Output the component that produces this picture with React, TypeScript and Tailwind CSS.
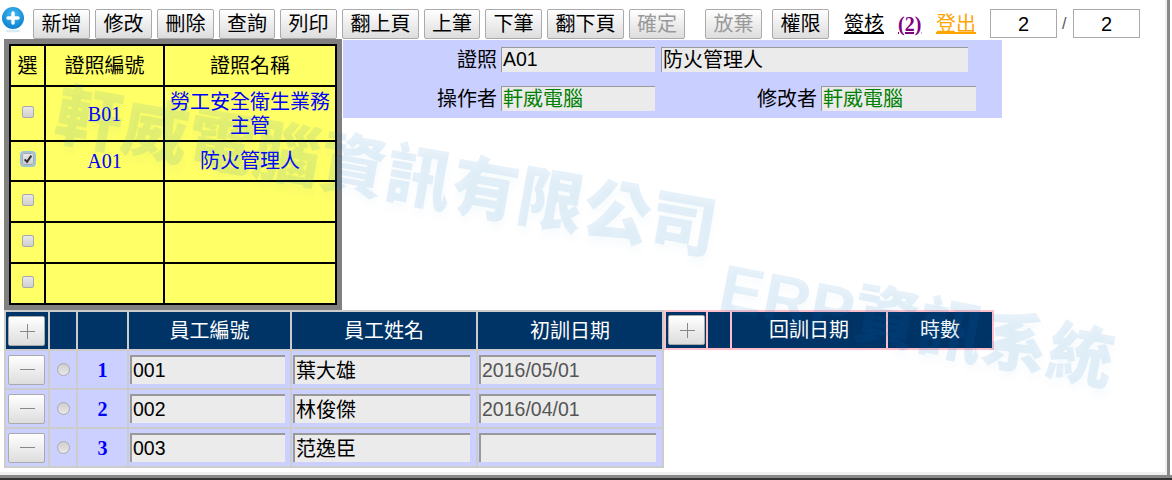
const font = "font-['Liberation_Sans','Noto_Sans_CJK_TC',sans-serif]";

function Btn({ label, disabled, w }: { label: string; disabled?: boolean; w: string }) {
  return (
    <button
      className={`${w} h-[30px] rounded-[2px] border border-[#aaaaaa] bg-gradient-to-b from-white to-[#dddddd] text-[20px] leading-none ${disabled ? 'text-[#999999]' : 'text-black'}`}
    >
      {label}
    </button>
  );
}

function Check({ checked }: { checked?: boolean }) {
  return (
    <span
      className={`mb-[4px] flex h-[12px] w-[12px] items-center justify-center rounded-[2px] border border-[#aaaaaa] bg-gradient-to-b from-[#e8e8e8] to-[#cfcfcf] ${checked ? 'outline-2 outline-[#9cc4dc]' : ''}`}
    >
      {checked && (
        <svg viewBox="0 0 12 12" className="h-[10px] w-[10px]">
          <path d="M2 6.5 L4.8 9.5 L10 2" fill="none" stroke="#333333" strokeWidth="2.4" />
        </svg>
      )}
    </span>
  );
}

function YCell({ children, className = '' }: { children?: React.ReactNode; className?: string }) {
  return (
    <div className={`flex items-center justify-center bg-[#ffff66] text-center text-[20px] leading-[24px] ${className}`}>
      {children}
    </div>
  );
}

function Field({ value, w, color = 'text-black', latin }: { value: string; w: string; color?: string; latin?: boolean }) {
  return (
    <div className={`${w} flex h-[25px] items-center border-t border-l border-[#999999] bg-[#ebebeb] pl-[1px] leading-none ${latin ? 'text-[19.5px]' : 'text-[20px]'} ${color}`}>
      {value}
    </div>
  );
}

function Cell({ value, w, gray, latin }: { value?: string; w: string; gray?: boolean; latin?: boolean }) {
  return (
    <div className="flex items-center bg-[#ccd0ff] pl-[1px]">
      <div className={`${w} flex h-[29px] items-center border-t-2 border-l-2 border-[#999999] bg-[#ebebeb] pl-[1px] leading-none ${latin ? 'text-[19.5px]' : 'text-[20px]'} ${gray ? 'text-[#555555]' : 'text-black'}`}>
        {value}
      </div>
    </div>
  );
}

function SmallBtn({ sign }: { sign: string }) {
  return (
    <button className="flex h-[30px] w-[37px] items-center justify-center rounded-[2px] border border-[#aaaaaa] bg-gradient-to-b from-white to-[#dddddd]">
      <svg viewBox="0 0 35 28" className="h-[28px] w-[35px]">
        <path d={sign === '+' ? 'M18.5 7V22M11 14.5H26' : 'M11 13.5H26'} stroke="#888888" strokeWidth="1" fill="none" />
      </svg>
    </button>
  );
}

const rows = [
  ['1', '001', '葉大雄', '2016/05/01'],
  ['2', '002', '林俊傑', '2016/04/01'],
  ['3', '003', '范逸臣', ''],
];

const mark =
  "pointer-events-none absolute origin-top-left leading-none font-black whitespace-nowrap text-[#0a78c8]/10 [text-shadow:2px_7px_7px_rgba(10,120,200,0.03)]";

export default function App() {
  return (
    <div className={`${font} relative h-[480px] w-[1172px] overflow-hidden bg-white text-black`}>
      <div className="flex h-[39px] items-start pt-[9px]">
        <svg viewBox="0 0 24 26" className="mt-[-2px] ml-[1px] h-[26px] w-[24px]">
          <defs>
            <radialGradient id="b" cx="50%" cy="35%" r="65%">
              <stop offset="0%" stopColor="#45bdf2" />
              <stop offset="100%" stopColor="#0a7fd0" />
            </radialGradient>
          </defs>
          <circle cx="12" cy="11" r="11" fill="url(#b)" />
          <ellipse cx="12" cy="24" rx="8" ry="1.5" fill="#d8ecf8" />
          <path d="M12 6V16M7 11H17" stroke="#ffffff" strokeWidth="3.4" strokeLinecap="round" />
        </svg>
        <div className="ml-[8px] flex gap-[5px]">
          <Btn label="新增" w="w-[57px]" />
          <Btn label="修改" w="w-[57px]" />
          <Btn label="刪除" w="w-[57px]" />
          <Btn label="查詢" w="w-[56px]" />
          <Btn label="列印" w="w-[57px]" />
          <Btn label="翻上頁" w="w-[77px]" />
          <Btn label="上筆" w="w-[56px]" />
          <Btn label="下筆" w="w-[57px]" />
          <Btn label="翻下頁" w="w-[77px]" />
          <Btn label="確定" w="w-[56px]" disabled />
        </div>
        <div className="ml-[20px]"><Btn label="放棄" w="w-[57px]" disabled /></div>
        <div className="ml-[10px]"><Btn label="權限" w="w-[57px]" /></div>
        <span className="ml-[15px] w-[40px] text-[20px] leading-[30px] underline">簽核</span>
        <span className="ml-[14px] w-[23px] font-['Liberation_Serif',serif] text-[20px] leading-[30px] font-bold text-[#800080] underline">(2)</span>
        <span className="ml-[15px] w-[40px] text-[20px] leading-[30px] text-[#ffa500] underline">登出</span>
        <div className="ml-[14px] flex h-[29px] w-[67px] items-center justify-center border border-[#aaaaaa] text-[20px]">2</div>
        <span className="mx-[5px] w-[6px] text-[16px] leading-[30px] text-[#555555]">/</span>
        <div className="flex h-[29px] w-[67px] items-center justify-center border border-[#aaaaaa] text-[20px]">2</div>
      </div>

      <div className="flex h-[271px] items-start pl-[4px]">
        <div className="h-[271px] w-[338px] bg-[#808080] p-[5px]">
          <div className="grid grid-cols-[33px_117px_170px] grid-rows-[39px_53px_38px_39px_39px_39px] gap-[2px] bg-black p-[2px]">
            <YCell>選</YCell>
            <YCell>證照編號</YCell>
            <YCell>證照名稱</YCell>
            <YCell><Check /></YCell>
            <YCell className="font-['Liberation_Serif',serif] text-[#0000ff]">B01</YCell>
            <YCell className="text-[#0000ff]">勞工安全衛生業務<br />主管</YCell>
            <YCell><Check checked /></YCell>
            <YCell className="font-['Liberation_Serif',serif] text-[#0000ff]">A01</YCell>
            <YCell className="text-[#0000ff]">防火管理人</YCell>
            <YCell><Check /></YCell><YCell /><YCell />
            <YCell><Check /></YCell><YCell /><YCell />
            <YCell><Check /></YCell><YCell /><YCell />
          </div>
        </div>
        <div className="mt-[1px] ml-[1px] h-[78px] w-[659px] bg-[#c9d0ff] text-[20px] leading-none">
          <div className="mt-[7px] flex h-[25px] items-center">
            <span className="w-[154px] text-right">證照</span>
            <div className="w-[4px]" />
            <Field value="A01" w="w-[154px]" latin />
            <div className="w-[6px]" />
            <Field value="防火管理人" w="w-[307px]" />
          </div>
          <div className="mt-[14px] flex h-[25px] items-center">
            <span className="w-[154px] text-right">操作者</span>
            <div className="w-[4px]" />
            <Field value="軒威電腦" w="w-[154px]" color="text-[#008000]" />
            <span className="w-[162px] text-right">修改者</span>
            <div className="w-[4px]" />
            <Field value="軒威電腦" w="w-[155px]" color="text-[#008000]" />
          </div>
        </div>
      </div>

      <div className="flex items-start pl-[4px]">
        <div className="grid w-[660px] grid-cols-[42px_26px_49px_161px_184px_184px] grid-rows-[37px_37px_37px_37px] gap-[2px] bg-[#cccccc] p-[2px]">
          <div className="flex items-center bg-[#003366] pl-[2px]"><SmallBtn sign="+" /></div>
          <div className="bg-[#003366]" />
          <div className="bg-[#003366]" />
          <div className="flex items-center justify-center bg-[#003366] text-[20px] text-white">員工編號</div>
          <div className="flex items-center justify-center bg-[#003366] text-[20px] text-white">員工姓名</div>
          <div className="flex items-center justify-center bg-[#003366] text-[20px] text-white">初訓日期</div>
          {rows.map((r) => (
            <div key={r[0]} className="contents">
              <div className="flex items-center bg-[#ccd0ff] pl-[2px]"><SmallBtn sign="-" /></div>
              <div className="flex items-center justify-center bg-[#ccd0ff]">
                <span className="h-[13px] w-[13px] rounded-full border border-[#aaaaaa] bg-gradient-to-b from-[#cfcfcf] to-[#e8e8e8]" />
              </div>
              <div className="flex items-center justify-center bg-[#ccd0ff] font-['Liberation_Serif',serif] text-[20px] font-bold text-[#0000ff]">{r[0]}</div>
              <Cell value={r[1]} w="w-[155px]" latin />
              <Cell value={r[2]} w="w-[177px]" />
              <Cell value={r[3]} w="w-[177px]" gray latin />
            </div>
          ))}
        </div>
        <div className="grid h-[40px] grid-cols-[40px_22px_154px_104px] gap-[2px] bg-[#ffc0cb] p-[2px]">
          <div className="flex items-center justify-center bg-[#003366]"><SmallBtn sign="+" /></div>
          <div className="bg-[#003366]" />
          <div className="flex items-center justify-center bg-[#003366] text-[20px] text-white">回訓日期</div>
          <div className="flex items-center justify-center bg-[#003366] text-[20px] text-white">時數</div>
        </div>
      </div>

      <div className={`${mark} top-[81px] left-[62px] rotate-[10deg] text-[67px]`}>軒威電腦資訊有限公司</div>
      <div className={`${mark} top-[254px] left-[727px] rotate-[11deg] text-[66px]`}>ERP資訊系統</div>

      <div className="absolute right-[5px] bottom-[5px] left-0 h-[3px] bg-[#f0f0f0]" />
      <div className="absolute top-0 right-[5px] bottom-[5px] w-[2px] bg-[#f0f0f0]" />
      <div className="absolute right-0 bottom-0 left-0 h-[5px] border-t-[3px] border-[#888888] bg-[#333333]" />
      <div className="absolute top-0 right-0 bottom-[5px] w-[5px] border-l-[3px] border-[#888888] bg-white" />
    </div>
  );
}
